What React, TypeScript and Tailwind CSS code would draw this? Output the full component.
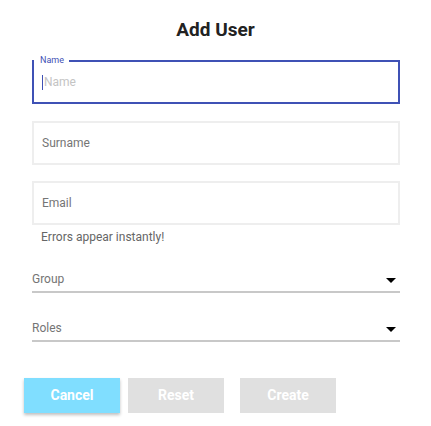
import React from 'react';

const Caret = () => (
  <svg width="10" height="5" viewBox="0 0 10 5" className="mr-[4px]">
    <path d="M0 0 L10 0 L5 5 Z" fill="#000" />
  </svg>
);

const App = () => {
  return (
    <div className="w-[431px] h-[426px] bg-white font-['Roboto',sans-serif]">
      <h1 className="pt-[20px] h-[40px] text-center text-[19px] leading-[20px] font-bold text-[#222]">
        Add User
      </h1>

      <div className="px-[32px] pr-[31px] mt-[20px]">
        <div className="relative h-[44px] border-2 border-[#3f51b5] flex items-center pl-[8px]">
          <span className="absolute left-0 -top-[7px] bg-white pl-[6px] pr-[5px] text-[9px] leading-[10px] text-[#3f51b5]">
            Name
          </span>
          <span className="w-px h-[15px] bg-[#3f51b5] mr-px" />
          <span className="text-[12px] text-[#c4c4c4]">Name</span>
        </div>

        <div className="mt-[17px] h-[44px] border-2 border-[#eeeeee] flex items-center pl-[8px]">
          <span className="text-[12px] text-[#757575]">Surname</span>
        </div>

        <div className="mt-[16px] h-[44px] border-2 border-[#eeeeee] flex items-center pl-[8px]">
          <span className="text-[12px] text-[#757575]">Email</span>
        </div>
        <div className="pl-[9px] mt-[5px] text-[12px] leading-[14px] text-[#666]">
          Errors appear instantly!
        </div>

        <div className="mt-[25px] h-[24px] flex items-center justify-between border-b-2 border-[#c8c8c8]">
          <span className="text-[12px] text-[#757575] -mt-[2px]">Group</span>
          <Caret />
        </div>

        <div className="mt-[25px] h-[24px] flex items-center justify-between border-b-2 border-[#c8c8c8]">
          <span className="text-[12px] text-[#757575] -mt-[2px]">Roles</span>
          <Caret />
        </div>
      </div>

      <div className="flex mt-[36px] pl-[24px]">
        <button className="w-[96px] h-[35px] bg-[#80deff] text-white text-[14px] font-bold shadow-[0_2px_3px_rgba(0,0,0,0.25)]">
          Cancel
        </button>
        <button className="ml-[8px] w-[96px] h-[35px] bg-[#e0e0e0] text-white text-[14px] font-bold">
          Reset
        </button>
        <button className="ml-[16px] w-[96px] h-[35px] bg-[#e0e0e0] text-white text-[14px] font-bold">
          Create
        </button>
      </div>
    </div>
  );
};

export default App;
